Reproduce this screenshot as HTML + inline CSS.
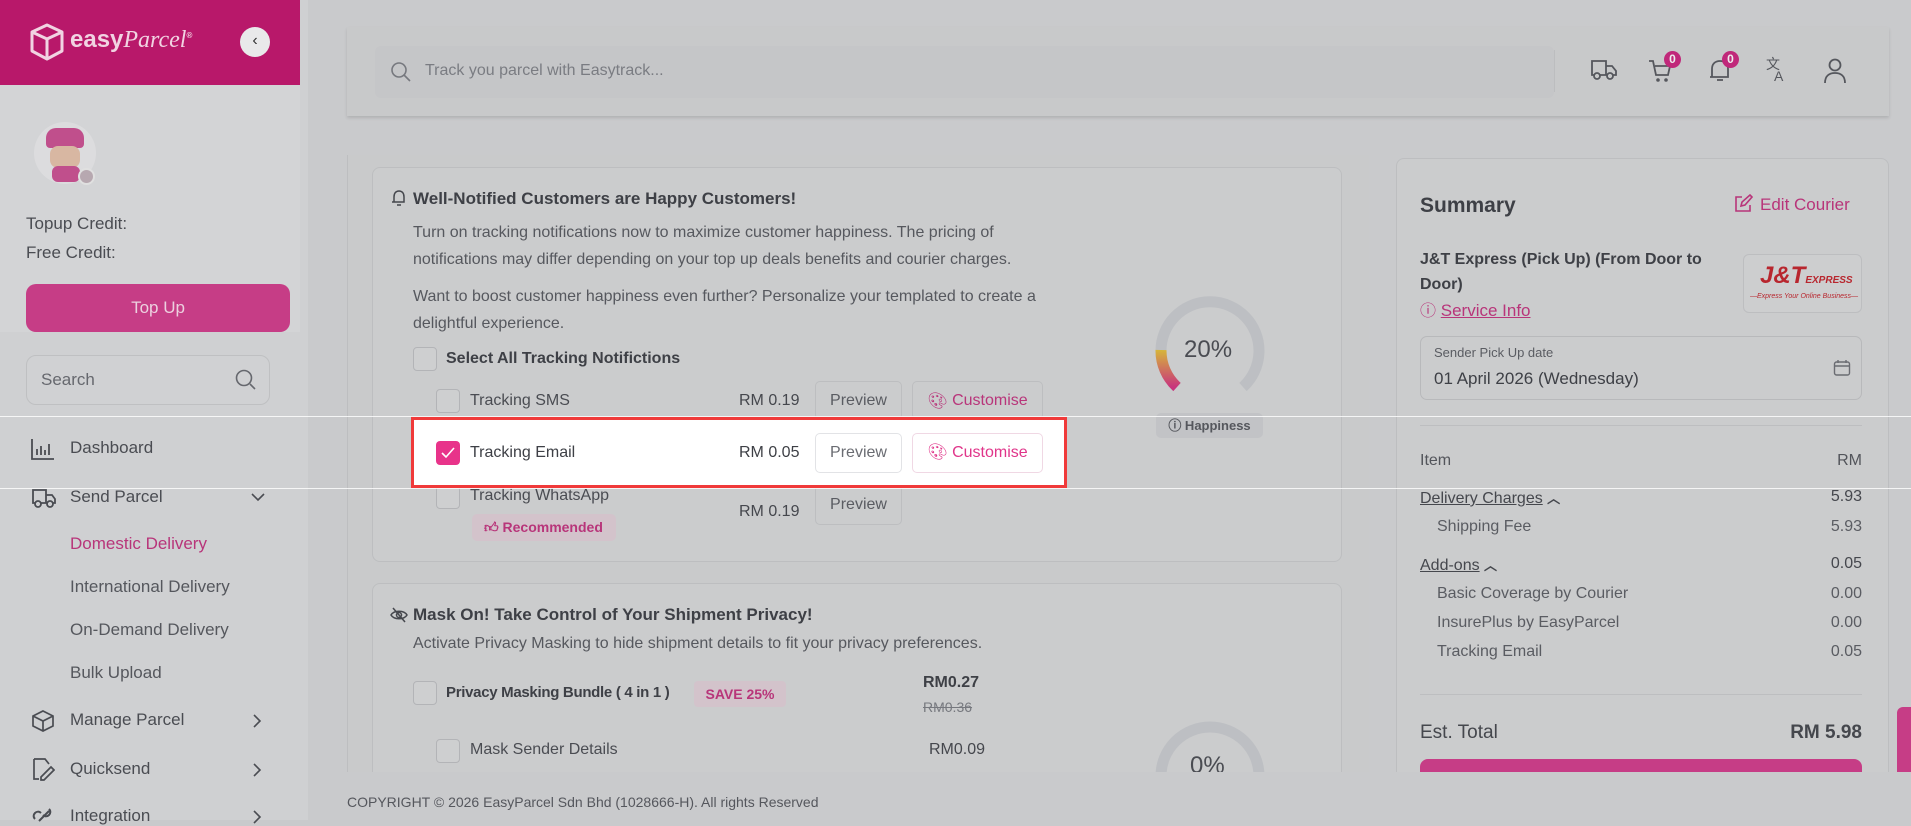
<!DOCTYPE html>
<html><head><meta charset="utf-8"><style>
*{box-sizing:border-box;margin:0;padding:0}
body{width:1911px;height:820px;overflow:hidden;position:relative;background:#c9cacc;font-family:"Liberation Sans",sans-serif;color:#45474d}
.a{position:absolute;white-space:nowrap}
.side{left:0;top:0;width:308px;height:820px;background:#cfd0d2}
.nav{font-size:17px;color:#4a4c52}
.sub{font-size:17px;color:#55575d}
.card{position:absolute;background:#cbcccd;border:1px solid #bdbec0;border-radius:8px}
.cb{position:absolute;width:24px;height:24px;border:1.5px solid #b3b4b7;border-radius:4px;background:#cecfd0}
.btn{position:absolute;border:1px solid #bdbec0;border-radius:5px;font-size:16px;color:#5a5c62;display:flex;align-items:center;justify-content:center;background:#cbcccd}
.pk{color:#b8357a}
.t16{font-size:16px}
.row{position:absolute;left:1420px;width:442px;font-size:16px;display:flex;justify-content:space-between;color:#53555b}
</style></head><body>

<div class="a side"></div>
<div class="a" style="left:0;top:85px;width:300px;height:247px;background:#d3d4d6"></div>
<div class="a" style="left:0;top:0;width:300px;height:85px;background:#b8186a"></div>
<svg class="a" style="left:29px;top:22px" width="36" height="40" viewBox="0 0 36 40"><path d="M18 3L33 10V29L18 37L3 29V10Z M3 10L18 17L33 10 M18 17V37" fill="none" stroke="#f1d3e2" stroke-width="3" stroke-linejoin="round"/></svg>
<div class="a" style="left:70px;top:26px;font-size:24px;font-weight:bold;color:#f1d3e2">easy<i style="font-family:'Liberation Serif',serif;font-weight:normal">Parcel</i><sup style="font-size:8px">®</sup></div>
<div class="a" style="left:240px;top:27px;width:30px;height:30px;border-radius:50%;background:#e9e9ea;text-align:center;line-height:28px;font-size:16px;color:#333">‹</div>
<div class="a" style="left:34px;top:122px;width:62px;height:62px;border-radius:50%;background:#dcdcde"></div>
<div class="a" style="left:46px;top:128px;width:38px;height:20px;border-radius:10px 10px 4px 4px;background:#c04f8c"></div>
<div class="a" style="left:50px;top:146px;width:30px;height:22px;border-radius:8px;background:#d8b7a2"></div>
<div class="a" style="left:52px;top:166px;width:28px;height:16px;border-radius:6px;background:#c04f8c"></div>
<div class="a" style="left:78px;top:168px;width:17px;height:17px;border-radius:50%;background:#b7a8b0;border:2px solid #e0e0e0"></div>
<div class="a" style="left:26px;top:214px;font-size:17px;color:#4a4c52">Topup Credit:</div>
<div class="a" style="left:26px;top:243px;font-size:17px;color:#4a4c52">Free Credit:</div>
<div class="a" style="left:26px;top:284px;width:264px;height:48px;border-radius:10px;background:#c63d86;color:#ecd0df;font-size:17px;text-align:center;line-height:48px">Top Up</div>
<div class="a" style="left:26px;top:355px;width:244px;height:50px;border-radius:10px;border:1px solid #bfc0c2;background:#d0d1d3"></div>
<div class="a" style="left:41px;top:370px;font-size:17px;color:#66686e">Search</div>
<svg class="a" style="left:234px;top:368px" width="24" height="24" viewBox="0 0 24 24"><circle cx="10" cy="10" r="7.5" fill="none" stroke="#66686e" stroke-width="1.6"/><path d="M16 16L21 21" stroke="#66686e" stroke-width="1.6"/></svg>

<svg class="a" style="left:31px;top:438px" width="24" height="22" viewBox="0 0 24 22"><path d="M1 1V21H23 M6 17V11 M10 17V8 M14 17V12 M18 17V6" fill="none" stroke="#4a4c52" stroke-width="1.8"/></svg>
<div class="a nav" style="left:70px;top:438px">Dashboard</div>
<svg class="a" style="left:31px;top:487px" width="26" height="22" viewBox="0 0 26 22"><path d="M2 3H15V16H2Z M15 8H21L24 12V16H15" fill="none" stroke="#4a4c52" stroke-width="1.8"/><circle cx="7" cy="17" r="3" fill="#cfd0d2" stroke="#4a4c52" stroke-width="1.8"/><circle cx="19" cy="17" r="3" fill="#cfd0d2" stroke="#4a4c52" stroke-width="1.8"/></svg>
<div class="a nav" style="left:70px;top:487px">Send Parcel</div>
<svg class="a" style="left:250px;top:491px" width="16" height="12" viewBox="0 0 16 12"><path d="M2 3L8 9L14 3" fill="none" stroke="#4a4c52" stroke-width="1.6"/></svg>
<div class="a sub" style="left:70px;top:534px;color:#b8357a">Domestic Delivery</div>
<div class="a sub" style="left:70px;top:577px">International Delivery</div>
<div class="a sub" style="left:70px;top:620px">On-Demand Delivery</div>
<div class="a sub" style="left:70px;top:663px">Bulk Upload</div>
<svg class="a" style="left:31px;top:709px" width="24" height="24" viewBox="0 0 24 24"><path d="M12 2L22 7V17L12 22L2 17V7Z M2 7L12 12L22 7 M12 12V22" fill="none" stroke="#4a4c52" stroke-width="1.7"/></svg>
<div class="a nav" style="left:70px;top:710px">Manage Parcel</div>
<svg class="a" style="left:251px;top:713px" width="12" height="16" viewBox="0 0 12 16"><path d="M3 2L9 8L3 14" fill="none" stroke="#4a4c52" stroke-width="1.6"/></svg>
<svg class="a" style="left:31px;top:757px" width="24" height="24" viewBox="0 0 24 24"><path d="M3 2H14L18 7 M3 2V22H8 M10 20L20 10L23 13L13 23H10Z" fill="none" stroke="#4a4c52" stroke-width="1.7"/></svg>
<div class="a nav" style="left:70px;top:759px">Quicksend</div>
<svg class="a" style="left:251px;top:762px" width="12" height="16" viewBox="0 0 12 16"><path d="M3 2L9 8L3 14" fill="none" stroke="#4a4c52" stroke-width="1.6"/></svg>
<svg class="a" style="left:31px;top:805px" width="26" height="20" viewBox="0 0 26 20"><path d="M4 14C0 10 6 4 10 8 M12 10C16 14 22 8 18 4 M8 16L18 6" fill="none" stroke="#4a4c52" stroke-width="2"/></svg>
<div class="a nav" style="left:70px;top:806px">Integration</div>
<svg class="a" style="left:251px;top:809px" width="12" height="16" viewBox="0 0 12 16"><path d="M3 2L9 8L3 14" fill="none" stroke="#4a4c52" stroke-width="1.6"/></svg>

<!-- top bar -->
<div class="a" style="left:347px;top:27px;width:1542px;height:89px;background:#c8c9ca;box-shadow:0 2px 3px rgba(0,0,0,.12)"></div>
<div class="a" style="left:375px;top:46px;width:1179px;height:52px;border-radius:6px;background:#c5c6c8"></div>
<svg class="a" style="left:390px;top:61px" width="22" height="22" viewBox="0 0 22 22"><circle cx="9" cy="9" r="7" fill="none" stroke="#76787e" stroke-width="1.6"/><path d="M14 14L20 20" stroke="#76787e" stroke-width="1.6"/></svg>
<div class="a" style="left:425px;top:62px;font-size:16px;color:#7a7c82">Track you parcel with Easytrack...</div>
<div class="a" style="left:1554px;top:50px;width:1px;height:42px;background:#bcbdbf"></div>
<svg class="a" style="left:1590px;top:58px" width="28" height="24" viewBox="0 0 28 24"><path d="M2 3H16V17H2Z M16 8H22L26 13V17H16" fill="none" stroke="#55575d" stroke-width="1.8"/><circle cx="7" cy="18" r="3" fill="#c8c9ca" stroke="#55575d" stroke-width="1.8"/><circle cx="20" cy="18" r="3" fill="#c8c9ca" stroke="#55575d" stroke-width="1.8"/></svg>
<svg class="a" style="left:1648px;top:58px" width="26" height="26" viewBox="0 0 26 26"><path d="M1 3H5L8 17H20L22 8H7" fill="none" stroke="#55575d" stroke-width="1.8"/><circle cx="10" cy="22" r="1.8" fill="#55575d"/><circle cx="18" cy="22" r="1.8" fill="#55575d"/></svg>
<div class="a" style="left:1664px;top:51px;width:17px;height:17px;border-radius:50%;background:#c0287a;color:#eee;font-size:12px;font-weight:bold;text-align:center;line-height:17px">0</div>
<svg class="a" style="left:1707px;top:58px" width="26" height="26" viewBox="0 0 26 26"><path d="M5 19V11C5 6 8 3 13 3C18 3 21 6 21 11V19H3 M10 22H16" fill="none" stroke="#55575d" stroke-width="1.8"/></svg>
<div class="a" style="left:1722px;top:51px;width:17px;height:17px;border-radius:50%;background:#c0287a;color:#eee;font-size:12px;font-weight:bold;text-align:center;line-height:17px">0</div>
<div class="a" style="left:1766px;top:58px;font-size:14px;color:#55575d;line-height:12px">文<br><span style="margin-left:8px">A</span></div>
<svg class="a" style="left:1822px;top:57px" width="26" height="28" viewBox="0 0 26 28"><circle cx="13" cy="8" r="5.5" fill="none" stroke="#55575d" stroke-width="1.8"/><path d="M3 26C3 19 7 16 13 16C19 16 23 19 23 26" fill="none" stroke="#55575d" stroke-width="1.8"/></svg>

<!-- main panel -->
<div class="a" style="left:347px;top:155px;width:1022px;height:617px;border-left:1px solid #bdbec0;background:#c9cacb"></div>
<div class="card" style="left:372px;top:167px;width:970px;height:395px"></div>
<svg class="a" style="left:391px;top:189px" width="16" height="18" viewBox="0 0 16 18"><path d="M3 13V8C3 4 5 2 8 2C11 2 13 4 13 8V13H1 M6 16H10" fill="none" stroke="#45474d" stroke-width="1.5"/></svg>
<div class="a" style="left:413px;top:189px;font-size:17px;font-weight:bold;color:#3e4046">Well-Notified Customers are Happy Customers!</div>
<div class="a t16" style="left:413px;top:219px;color:#56585e;line-height:27px">Turn on tracking notifications now to maximize customer happiness. The pricing of<br>notifications may differ depending on your top up deals benefits and courier charges.</div>
<div class="a t16" style="left:413px;top:283px;color:#56585e;line-height:27px">Want to boost customer happiness even further? Personalize your templated to create a<br>delightful experience.</div>
<div class="cb" style="left:413px;top:347px"></div>
<div class="a" style="left:446px;top:350px;font-size:16px;font-weight:bold;color:#3e4046">Select All Tracking Notifictions</div>
<div class="cb" style="left:436px;top:389px"></div>
<div class="a t16" style="left:470px;top:392px;color:#4a4c52">Tracking SMS</div>
<div class="a t16" style="left:739px;top:392px;color:#45474d">RM 0.19</div>
<div class="btn" style="left:815px;top:381px;width:87px;height:39px">Preview</div>
<div class="btn pk" style="left:912px;top:381px;width:131px;height:39px"><span style="font-size:16px">🎨︎</span>&nbsp;Customise</div>

<!-- whatsapp -->
<div class="cb" style="left:436px;top:485px"></div>
<div class="a t16" style="left:470px;top:487px;color:#4a4c52">Tracking WhatsApp</div>
<div class="a" style="left:472px;top:514px;width:144px;height:27px;border-radius:5px;background:#d3c3cb;color:#b8357a;font-size:14px;font-weight:bold;line-height:27px;padding-left:12px">👍︎ Recommended</div>
<div class="a t16" style="left:739px;top:503px;color:#45474d">RM 0.19</div>
<div class="btn" style="left:815px;top:485px;width:87px;height:40px">Preview</div>

<!-- gauge -->
<svg class="a" style="left:1150px;top:292px" width="120" height="120" viewBox="0 0 120 120"><defs><linearGradient id="g" x1="0" y1="0" x2="0" y2="1"><stop offset="0" stop-color="#d6b53a"/><stop offset="1" stop-color="#c8357d"/></linearGradient></defs>
<path d="M27 95A49 49 0 1 1 93 95" fill="none" stroke="#bdbfc3" stroke-width="11"/>
<path d="M11 58A49 49 0 0 0 27 95" fill="none" stroke="url(#g)" stroke-width="11"/></svg>
<div class="a" style="left:1184px;top:336px;font-size:24px;color:#4a4c52">20%</div>
<div class="a" style="left:1156px;top:413px;width:107px;height:25px;border-radius:5px;background:#c2c3c6;font-size:13px;font-weight:bold;color:#55575d;text-align:center;line-height:25px">ⓘ Happiness</div>

<!-- card 2 -->
<div class="card" style="left:372px;top:583px;width:970px;height:230px"></div>
<svg class="a" style="left:390px;top:606px" width="18" height="18" viewBox="0 0 18 18"><path d="M1 9C4 4 14 4 17 9C14 14 4 14 1 9Z M3 2L15 16" fill="none" stroke="#45474d" stroke-width="1.5"/><circle cx="9" cy="9" r="2.5" fill="none" stroke="#45474d" stroke-width="1.5"/></svg>
<div class="a" style="left:413px;top:605px;font-size:17px;font-weight:bold;color:#3e4046">Mask On! Take Control of Your Shipment Privacy!</div>
<div class="a t16" style="left:413px;top:635px;color:#56585e">Activate Privacy Masking to hide shipment details to fit your privacy preferences.</div>
<div class="cb" style="left:413px;top:681px"></div>
<div class="a" style="left:446px;top:684px;font-size:15px;font-weight:bold;color:#3e4046;letter-spacing:-0.3px">Privacy Masking Bundle ( 4 in 1 )</div>
<div class="a" style="left:694px;top:681px;width:92px;height:26px;border-radius:4px;background:#d3c3cb;color:#b8357a;font-size:14px;font-weight:bold;text-align:center;line-height:26px">SAVE 25%</div>
<div class="a" style="left:923px;top:674px;font-size:16px;font-weight:bold;color:#3e4046">RM0.27</div>
<div class="a" style="left:923px;top:699px;font-size:14px;color:#76787e;text-decoration:line-through">RM0.36</div>
<div class="cb" style="left:436px;top:739px"></div>
<div class="a t16" style="left:470px;top:741px;color:#4a4c52">Mask Sender Details</div>
<div class="a t16" style="left:929px;top:741px;color:#45474d">RM0.09</div>
<svg class="a" style="left:1150px;top:710px" width="120" height="62" viewBox="0 0 120 62"><path d="M11 66A49 49 0 0 1 109 66" fill="none" stroke="#bdbfc3" stroke-width="11"/></svg>
<div class="a" style="left:1190px;top:752px;font-size:24px;color:#4a4c52">0%</div>

<!-- summary -->
<div class="card" style="left:1396px;top:158px;width:493px;height:640px"></div>
<div class="a" style="left:1420px;top:194px;font-size:21px;font-weight:bold;color:#3e4046">Summary</div>
<svg class="a" style="left:1733px;top:194px" width="20" height="20" viewBox="0 0 20 20"><path d="M9 3H3V17H17V11 M8 12L9 8L17 1L19 3L12 11Z" fill="none" stroke="#b8357a" stroke-width="1.6"/></svg>
<div class="a pk" style="left:1760px;top:195px;font-size:17px">Edit Courier</div>
<div class="a" style="left:1420px;top:247px;font-size:16px;font-weight:bold;color:#3e4046;line-height:25px">J&amp;T Express (Pick Up) (From Door to<br>Door)</div>
<div class="a pk" style="left:1420px;top:297px;font-size:17px"><span style="font-size:16px">ⓘ</span> <u>Service Info</u></div>
<div class="a" style="left:1743px;top:254px;width:119px;height:59px;border-radius:6px;border:1px solid #bdbec0;background:#cdcecf"></div>
<div class="a" style="left:1760px;top:262px;font-size:24px;font-weight:bold;font-style:italic;color:#b8262e">J&amp;T<span style="font-size:10px">EXPRESS</span></div>
<div class="a" style="left:1750px;top:293px;font-size:7px;font-style:italic;color:#b8262e">—Express Your Online Business—</div>
<div class="a" style="left:1420px;top:336px;width:442px;height:64px;border-radius:7px;border:1px solid #b8b9bb"></div>
<div class="a" style="left:1434px;top:345px;font-size:13px;color:#5a5c62">Sender Pick Up date</div>
<div class="a" style="left:1434px;top:369px;font-size:17px;color:#3e4046">01 April 2026 (Wednesday)</div>
<svg class="a" style="left:1833px;top:359px" width="18" height="18" viewBox="0 0 18 18"><rect x="1.5" y="3" width="15" height="13" rx="2" fill="none" stroke="#6a6c72" stroke-width="1.4"/><path d="M1.5 7H16.5 M5 1V4 M13 1V4" stroke="#6a6c72" stroke-width="1.4"/></svg>
<div class="a" style="left:1420px;top:425px;width:442px;height:1px;background:#bdbec0"></div>
<div class="row" style="top:452px"><span>Item</span><span>RM</span></div>
<div class="row" style="top:488px;color:#45474d"><span><u>Delivery Charges</u> <b style="font-size:13px">︿</b></span><span>5.93</span></div>
<div class="row" style="top:518px;padding-left:17px;color:#5a5c62"><span>Shipping Fee</span><span>5.93</span></div>
<div class="row" style="top:555px;color:#45474d"><span><u>Add-ons</u> <b style="font-size:13px">︿</b></span><span>0.05</span></div>
<div class="row" style="top:585px;padding-left:17px;color:#5a5c62"><span>Basic Coverage by Courier</span><span>0.00</span></div>
<div class="row" style="top:614px;padding-left:17px;color:#5a5c62"><span>InsurePlus by EasyParcel</span><span>0.00</span></div>
<div class="row" style="top:643px;padding-left:17px;color:#5a5c62"><span>Tracking Email</span><span>0.05</span></div>
<div class="a" style="left:1420px;top:694px;width:442px;height:1px;background:#bdbec0"></div>
<div class="row" style="top:722px;font-size:19px;color:#45474d"><span>Est. Total</span><b>RM 5.98</b></div>
<div class="a" style="left:1420px;top:759px;width:442px;height:20px;border-radius:8px 8px 0 0;background:#c63d86"></div>
<div class="a" style="left:1897px;top:707px;width:20px;height:95px;border-radius:6px 0 0 6px;background:#c63d86"></div>

<!-- footer -->
<div class="a" style="left:308px;top:772px;width:1603px;height:48px;background:#c9cacc"></div>
<div class="a" style="left:347px;top:794px;font-size:14px;color:#55575d">COPYRIGHT © 2026 EasyParcel Sdn Bhd (1028666-H). All rights Reserved</div>

<!-- spotlight lines -->
<div class="a" style="left:0;top:416px;width:1911px;height:1px;background:rgba(255,255,255,.8)"></div>
<div class="a" style="left:0;top:488px;width:1911px;height:1px;background:rgba(255,255,255,.8)"></div>

<!-- spotlight -->
<div class="a" style="left:411px;top:417px;width:656px;height:71px;background:#fff;border:3px solid #f03a3a"></div>
<div class="a" style="left:436px;top:441px;width:24px;height:24px;border-radius:4px;background:#e8338a"></div>
<svg class="a" style="left:440px;top:445px" width="16" height="16" viewBox="0 0 16 16"><path d="M2 8L6 12L14 3" fill="none" stroke="#fff" stroke-width="1.6"/></svg>
<div class="a t16" style="left:470px;top:444px;color:#3e4046">Tracking Email</div>
<div class="a t16" style="left:739px;top:444px;color:#3e4046">RM 0.05</div>
<div class="a" style="left:815px;top:433px;width:87px;height:40px;border:1px solid #e2e3e6;border-radius:5px;font-size:16px;color:#6a6c72;text-align:center;line-height:38px">Preview</div>
<div class="a" style="left:912px;top:433px;width:131px;height:40px;border:1px solid #f0d8e4;border-radius:5px;font-size:16px;color:#e0358a;text-align:center;line-height:38px">🎨︎ Customise</div>
</body></html>
